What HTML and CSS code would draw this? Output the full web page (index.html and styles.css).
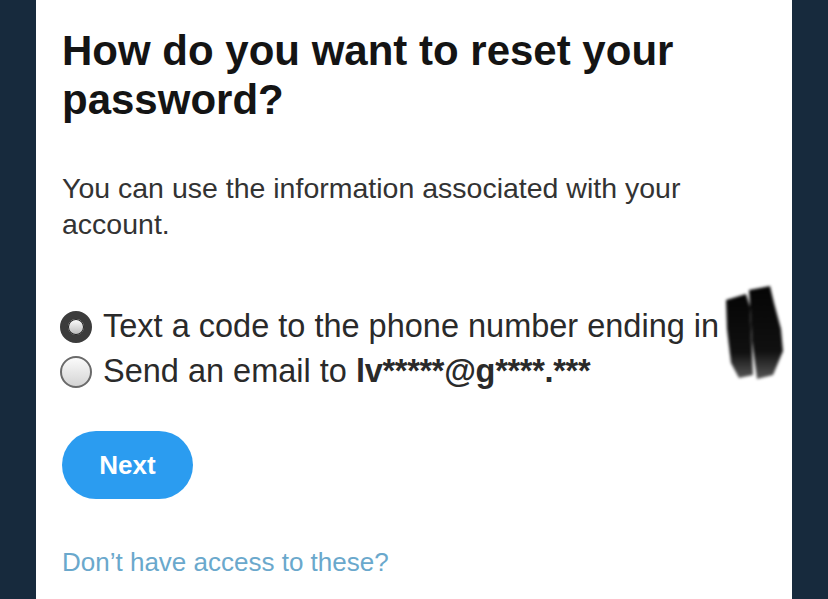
FILE: index.html
```html
<!DOCTYPE html>
<html lang="en">

<head>
    <meta charset="UTF-8">
    <meta name="viewport" content="width=device-width, initial-scale=1.0">
    <title>Reset password</title>
    <link rel="stylesheet" href="styles.css">
</head>

<body>
    <div class="panel">
        <h1>How do you want to reset your password?</h1>
        <p class="intro">You can use the information associated with your account.</p>

        <form class="options">
            <label class="option">
                <input type="radio" name="method" checked>
                <span class="radio"></span>
                <span>Text a code to the phone number ending in</span>
                <!-- scribbled-out digits -->
                <svg class="scribble" width="75" height="105" viewBox="0 0 75 105">
                    <defs>
                        <linearGradient id="ink" x1="0" y1="0" x2="0" y2="1">
                            <stop offset="0" stop-color="#050505" />
                            <stop offset="0.7" stop-color="#101010" />
                            <stop offset="1" stop-color="#555" />
                        </linearGradient>
                    </defs>
                    <g fill="url(#ink)">
                        <path d="M11 21 L31 15 L35 28 L37 70 L38 96 L24 99 L16 84 L12 50 Z" />
                        <path d="M34 11 L55 7 L59 24 L66 50 L68 72 L58 96 L42 100 L37 62 Z" />
                    </g>
                </svg>
            </label>
            <label class="option">
                <input type="radio" name="method">
                <span class="radio"></span>
                <span>Send an email to <b class="masked">lv*****@g****.***</b></span>
            </label>
        </form>

        <button type="button" class="button">Next</button>

        <a class="help" href="#">Don’t have access to these?</a>
    </div>
</body>

</html>
```

FILE: styles.css
```css
html,
body {
    margin: 0;
    height: 100%;
}

body {
    background-color: #172a3d;
    font-family: "Liberation Sans", Arial, sans-serif;
    color: #222;
}

.panel {
    background-color: #fff;
    margin: 0 36px;
    min-height: 100%;
    padding: 26px 24px 0 26px;
    box-sizing: border-box;
}

h1 {
    margin: 0;
    font-size: 42px;
    line-height: 49px;
    font-weight: bold;
    color: #141414;
}

.intro {
    margin: 46px 0 0;
    font-size: 28.5px;
    line-height: 36px;
    color: #333;
}

.options {
    margin-top: 62px;
    display: flex;
    flex-direction: column;
}

.option {
    display: flex;
    align-items: center;
    gap: 11px;
    font-size: 32.5px;
    line-height: 45px;
    color: #2a2a2a;
    position: relative;
}

.option input {
    display: none;
}

.masked {
    letter-spacing: -0.3px;
}

.radio {
    width: 32px;
    height: 32px;
    border-radius: 50%;
    border: 2px solid #6a6a6a;
    background: linear-gradient(#fbfbfb, #d4d4d4);
    box-sizing: border-box;
    flex-shrink: 0;
    margin-left: -2px;
}

.option input:checked + .radio {
    border: 8px solid #3c3c3c;
    background: linear-gradient(#fff, #b8b8b8);
    box-shadow: inset 0 0 0 1px #222;
}

.scribble {
    position: absolute;
    left: 653px;
    top: -25px;
    filter: blur(1.4px);
}

.button {
    display: block;
    margin-top: 37px;
    width: 131px;
    height: 68px;
    border: none;
    border-radius: 34px;
    background-color: #2b9cf0;
    color: #fff;
    font-family: inherit;
    font-size: 26px;
    font-weight: bold;
    cursor: pointer;
}

.help {
    display: block;
    margin-top: 48px;
    font-size: 26px;
    line-height: 30px;
    color: #6aa8cc;
    text-decoration: none;
}
```
